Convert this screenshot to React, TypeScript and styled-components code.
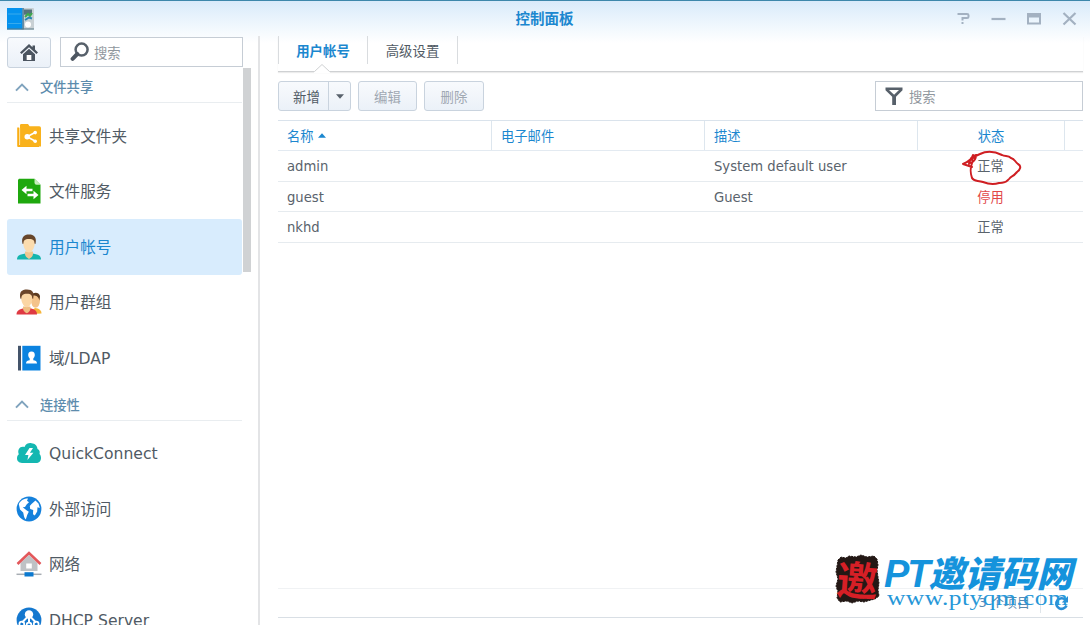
import React from "react";
import styled, { createGlobalStyle, css } from "styled-components";

const GlobalStyle = createGlobalStyle`
  * { box-sizing: border-box; }
  body {
    margin: 0;
    background: #fff;
    font-family: "DejaVu Sans", "Noto Sans CJK SC", sans-serif;
    color: #505a64;
  }
`;

const Window = styled.div`
  position: relative;
  width: 1090px;
  height: 625px;
  overflow: hidden;
  display: flex;
  flex-direction: column;
  background: linear-gradient(#d8eafa 0, #e6f2fc 14px, #fff 42px);
  border-top: 1px solid #3c87ab;
`;

const TitleBar = styled.header`
  display: grid;
  grid-template-columns: 1fr auto 1fr;
  align-items: center;
  height: 35px;
  flex: none;
  padding: 0 13px 0 7px;
`;

const Title = styled.h1`
  margin: 0 0 2px 5px;
  font: bold 14.5px/20px "Noto Sans CJK SC", sans-serif;
  color: #1b87cf;
`;

const WindowButtons = styled.div`
  display: flex;
  justify-content: flex-end;
  gap: 19px;
  padding-bottom: 2px;
  svg { display: block; }
`;

const Body = styled.div`
  display: flex;
  flex: 1;
  min-height: 0;
`;

const Sidebar = styled.aside`
  display: flex;
  flex-direction: column;
  width: 260px;
  flex: none;
  padding: 1px 7px 0 7px;
  border-right: 2px solid #e3e4e6;
`;

const SidebarTools = styled.div`
  display: flex;
  gap: 9px;
  height: 31px;
  flex: none;
`;

const raised = css`
  border: 1px solid #c9d3de;
  border-radius: 3px;
  background: linear-gradient(#f8fafd, #ebf1f8);
`;

const HomeButton = styled.div`
  ${raised}
  width: 44px;
  display: flex;
  align-items: center;
  justify-content: center;
`;

const SearchBox = styled.div<{ $width: number; $gap: number }>`
  display: flex;
  align-items: center;
  gap: ${(p) => p.$gap}px;
  width: ${(p) => p.$width}px;
  height: 30px;
  padding-left: 9px;
  border: 1px solid #c6cdd5;
  background: #fff;
  font-size: 13.3px;
  color: #8f969d;
`;

const SidebarScroll = styled.div`
  display: flex;
  flex: 1;
  min-height: 0;
  overflow: hidden;
`;

const Nav = styled.nav`
  width: 235px;
  flex: none;
`;

const ScrollThumb = styled.div`
  width: 9px;
  height: 204px;
  margin-left: 1px;
  background: #d0d2d4;
`;

const GroupHeader = styled.div`
  display: flex;
  align-items: center;
  gap: 10px;
  height: 35.4px;
  margin-bottom: 5px;
  padding: 3px 0 0 7px;
  border-bottom: 1px solid #e9edf0;
  font-size: 13.3px;
  font-weight: 500;
  color: #5d8cad;
`;

const NavItem = styled.div<{ $active?: boolean }>`
  display: flex;
  align-items: center;
  gap: 7px;
  height: 55.4px;
  padding-left: 9px;
  border-radius: 3px;
  font-size: 15.6px;
  line-height: 20px;
  white-space: nowrap;
  background: ${(p) => (p.$active ? "#d8ecfd" : "transparent")};
  color: ${(p) => (p.$active ? "#1b87cf" : "#505a64")};
  svg { flex: none; }
`;

const NavLabel = styled.span`
  padding-top: 2px;
`;

const Content = styled.main`
  display: flex;
  flex-direction: column;
  width: 805px;
  margin-left: 18px;
`;

const Tabs = styled.div`
  position: relative;
  display: flex;
  height: 36px;
  flex: none;
  border-bottom: 1px solid #cfd1d3;
  box-shadow: 0 1px 1px #ececec;
`;

const Tab = styled.div<{ $active?: boolean }>`
  display: flex;
  align-items: center;
  justify-content: center;
  width: 90px;
  height: 28px;
  border-right: 1px solid #d9dcdf;
  ${(p) => p.$active && "border-left: 1px solid #d9dcdf;"}
  font-size: 13.4px;
  font-weight: ${(p) => (p.$active ? 700 : 400)};
  color: ${(p) => (p.$active ? "#1b87cf" : "#505a64")};
`;

const TabNotch = styled.svg`
  position: absolute;
  left: 35px;
  bottom: -2px;
`;

const Toolbar = styled.div`
  display: flex;
  gap: 7px;
  height: 30px;
  flex: none;
  margin-top: 9px;
  > :last-child { margin-left: auto; }
`;

const Button = styled.div<{ $width: number; $disabled?: boolean }>`
  ${raised}
  display: flex;
  align-items: center;
  justify-content: center;
  width: ${(p) => p.$width}px;
  font-size: 13.4px;
  color: ${(p) => (p.$disabled ? "#a0a8b2" : "#505a64")};
`;

const ButtonLabel = styled.span`
  flex: 1;
  text-align: center;
  padding-left: 6px;
`;

const ButtonArrow = styled.span`
  display: flex;
  align-items: center;
  justify-content: center;
  width: 22px;
  align-self: stretch;
  border-left: 1px solid #c9d3de;
`;

const Table = styled.div`
  margin-top: 9px;
  border-top: 1px solid #dae3ec;
  flex: 1;
`;

const columns = "214px 213px 213px 147px 1fr";

const HeadRow = styled.div`
  display: grid;
  grid-template-columns: ${columns};
  height: 30px;
  border-bottom: 1px solid #e3eaf1;
`;

const HeadCell = styled.div<{ $center?: boolean }>`
  display: flex;
  align-items: center;
  gap: 4px;
  padding: 0 9px;
  justify-content: ${(p) => (p.$center ? "center" : "flex-start")};
  border-right: 1px solid #dde6ee;
  font-size: 13.3px;
  color: #1b87cf;
  &:last-child { border-right: 0; }
`;

const Row = styled.div`
  display: grid;
  grid-template-columns: ${columns};
  height: 30.6px;
  border-bottom: 1px solid #e6ebef;
`;

const Cell = styled.div<{ $center?: boolean; $alert?: boolean }>`
  display: flex;
  align-items: center;
  padding: ${(p) => (p.$center ? "0 10px 0 8px" : "2px 9px 0")};
  justify-content: ${(p) => (p.$center ? "center" : "flex-start")};
  font-size: 13.2px;
  white-space: nowrap;
  color: ${(p) => (p.$alert ? "#e24848" : "#5a636c")};
`;

const Footer = styled.footer`
  display: flex;
  align-items: center;
  justify-content: flex-end;
  height: 30px;
  flex: none;
  margin-bottom: 7px;
  padding-right: 14px;
  border-top: 1px solid #f0f2f4;
  border-bottom: 1px solid #d9dfe5;
  font-size: 13px;
  line-height: 18px;
  color: #5a8ab0;
`;

const RefreshArea = styled.span`
  display: flex;
  align-items: center;
  margin-left: 10px;
  padding-left: 13px;
  height: 20px;
  border-left: 1px solid #dfe5ea;
`;

const Scribble = styled.svg`
  position: absolute;
  left: 958px;
  top: 145px;
`;

const Watermark = styled.div`
  position: absolute;
  left: 835px;
  top: 552px;
  display: flex;
`;

const Seal = styled.div`
  position: relative;
  width: 48px;
  height: 54px;
  svg { display: block; }
`;

const SealText = styled.span`
  position: absolute;
  left: 2px;
  top: 4px;
  font: 700 41px/42px "Noto Sans CJK SC", sans-serif;
  color: #d61f26;
  transform: rotate(4deg);
`;

const WatermarkText = styled.div`
  display: flex;
  flex-direction: column;
  padding-left: 1px;
  white-space: nowrap;
`;

const Brand = styled.div`
  display: flex;
  align-items: baseline;
  height: 36px;
  font: italic 900 36px/36px "Noto Sans CJK SC", sans-serif;
  color: #1593dc;
`;

const BrandLatin = styled.span`
  font: italic 700 38px/36px "Liberation Sans", sans-serif;
  letter-spacing: -2px;
`;

const Site = styled.div`
  padding-left: 3px;
  font: 20px/18px "Liberation Serif", serif;
  letter-spacing: 0.4px;
  transform: scaleX(1.27);
  transform-origin: 3px 0;
  color: #2797d8;
`;

const Caret = ({ up }: { up?: boolean }) => (
  <svg width="8" height="5" viewBox="0 0 7 4">
    <path d={up ? "M0 4 3.5 0 7 4z" : "M0 0h7L3.5 4z"} fill={up ? "#1b87cf" : "#59626c"} />
  </svg>
);

const Chevron = () => (
  <svg width="16" height="10" viewBox="0 0 16 10">
    <path d="M2 8.6 8 2.6l6 6" fill="none" stroke="#7fa3bd" strokeWidth="2" />
  </svg>
);

const AppIcon = () => (
  <svg width="27" height="24" viewBox="0 0 27 24">
    <rect x="14" y="1" width="13" height="21.5" rx="1" fill="#c8d0d4" />
    <path d="M17 2.5h8v5.2h-8z" fill="#55727c" />
    <path d="m18 10 3-3 2 2 2-3" stroke="#3da94d" strokeWidth="2" fill="none" />
    <path d="m18 13 4-2.5 3 1" stroke="#2786b5" strokeWidth="2" fill="none" />
    <circle cx="21" cy="17.5" r="3" fill="#fff" />
    <path d="M0 1h15.5v21.5H0z" fill="#0492ee" />
    <path d="M1 7h13M1 16.5h13" stroke="#38abed" />
    <path d="M15.5 1h1.2v21.5h-1.2z" fill="#3f6f8c" />
    <path d="M0 22h27" stroke="#547784" />
  </svg>
);

const HomeIcon = () => (
  <svg width="20" height="19" viewBox="0 0 20 19">
    <path d="M10 1 1 9.5l1.6 1.6L10 4.3l7.4 6.8L19 9.5l-3-2.900V2.500h-2.500v1.800z" fill="#4c5560" />
    <path d="M4 11.200 10 5.800l6 5.400V18h-3.800v-6H7.800v6H4z" fill="#4c5560" />
    <path d="M7.800 12h4.400v5H7.800z" fill="#fff" />
    <path d="M4 17.500h12" stroke="#4c5560" />
  </svg>
);

const Magnifier = () => (
  <svg width="20" height="20" viewBox="0 0 20 20">
    <circle cx="11.600" cy="7.600" r="6" fill="none" stroke="#57606a" strokeWidth="2.500" />
    <path d="m7.300 12-4.700 4.800" stroke="#4c5560" strokeWidth="4" strokeLinecap="round" />
  </svg>
);

const Funnel = () => (
  <svg width="18" height="19" viewBox="0 0 18 19">
    <path d="M.5.500h17v2.700L11 9.800V18H7.200V9.800L.5 3.200z" fill="#57606a" />
    <path d="M4 3h10L9.100 7.800z" fill="#fff" />
  </svg>
);

const SharedFolderIcon = () => (
  <svg width="26" height="26" viewBox="0 0 26 26">
    <path d="M2.200 4.500v18.600H23" fill="none" stroke="#f9ad14" strokeWidth="2" strokeLinejoin="round" />
    <path d="M4 2.300Q4 1 5.400 1H12l1.600 2.200h9.600Q25 3.200 25 5v18.500H4z" fill="#f9b21c" />
    <path d="M3.700 5v16.500" stroke="#fbd580" strokeWidth=".8" />
    <path d="m19.500 9.200-8.500 4.600 8.500 4.400" fill="none" stroke="#fff" strokeWidth="1.600" />
    <circle cx="11.200" cy="13.800" r="2.700" fill="#fff" />
    <circle cx="19.200" cy="9.600" r="1.800" fill="#fff" />
    <circle cx="19.200" cy="18.200" r="1.800" fill="#fff" />
  </svg>
);

const FileServiceIcon = () => (
  <svg width="26" height="26" viewBox="0 0 26 26">
    <path d="M3 .8h15.500l6 6v18.700H2V1.800z" fill="#1fa80e" />
    <path d="M18.500.8v4q0 2 2 2h4z" fill="#c8edbd" />
    <path d="m5.500 12 5-4.200v2.900h6v2.600h-6v2.900zM22.500 17l-5 4.200v-2.900h-6v-2.600h6v-2.900z" fill="#fff" />
  </svg>
);

const UserIcon = () => (
  <svg width="26" height="26" viewBox="0 0 26 26">
    <path d="M1 25.500c0-4 3-5.200 8.500-6h7c5.500.8 8.500 2 8.500 6z" fill="#14b5ae" />
    <path d="M9 17.500h8v2.500c0 2-2 4-4 5-2-1-4-3-4-5z" fill="#efc791" />
    <path d="M7 7.500Q7 2 13 2t6 5.500c0 6-3 11-6 11s-6-5-6-11z" fill="#fbdcae" />
    <path d="M6.500 10C5 3 8 .5 13 .5S21 3 19.500 10l-1-.5c0-3-1-4.500-5.500-4.500S7.500 6.500 7.500 9.500z" fill="#67462b" />
  </svg>
);

const GroupIcon = () => (
  <svg width="26" height="26" viewBox="0 0 26 26">
    <path d="M15 25c1-3 2-5 4-6 4 .6 6.500 2 6.500 5.500z" fill="#f6b63c" />
    <ellipse cx="19.500" cy="11.500" rx="4.500" ry="7.300" fill="#f4c38a" />
    <path d="M15 6c3-4 9-2.500 9 1.500l-.6 4c-1-4-3-5-6-5z" fill="#5b3a20" />
    <path d="M.5 25.500c0-4 3-5.500 8-6.500h5c5 1 7.500 2.500 7.500 6.500z" fill="#df3a43" />
    <path d="M7 17.500h7.500v2c0 2-1.700 4-3.700 4.800-2-.8-3.800-2.800-3.800-4.800z" fill="#efbe83" />
    <path d="M5 7.500C5 3 7 2 10.700 2s5.800 1.500 5.800 5.500c0 6-2.800 10.700-5.700 10.700S5 13.500 5 7.500z" fill="#fbd6a4" />
    <path d="M4.400 9.800C3 3 5.500.5 11 .5s7.500 3 6.200 9.300l-1-.4c0-3-1-4.700-5.200-4.700-4.300 0-5.600 2-5.600 4.700z" fill="#6b4529" />
  </svg>
);

const DirectoryIcon = () => (
  <svg width="26" height="26" viewBox="0 0 26 26">
    <path d="M2 .8h3v24.700H2z" fill="#44546a" />
    <path d="M6.300.8h18.200v24.700H6.300z" fill="#0b83e0" />
    <path d="M15.500 6.500c2.300 0 3.500 1.500 3.300 3.800-.2 1.500-.8 2.500-1.500 3.200v1.800c2 .4 3.700.8 3.700 3.200H10c0-2.400 1.700-2.800 3.700-3.200v-1.800c-.7-.7-1.300-1.700-1.500-3.200-.2-2.300 1-3.800 3.300-3.800z" fill="#fff" />
  </svg>
);

const QuickConnectIcon = () => (
  <svg width="26" height="26" viewBox="0 0 26 26">
    <path d="M6 23c-3 0-5-2-5-4.700 0-2 .8-3.300 1.800-4.100C1 9 4.500 5.500 8.500 7 10 3.500 13 2.800 15.500 3.200c3.500.6 5.700 2 6 5.800 2.500 1 2.500 3.500 2 5 1 1 1.500 2.500 1.500 4 0 3-2 5-5 5z" fill="#14b7b1" />
    <path d="m13.500 8-4.500 7h3.400l-1 5 6-7.300h-3.500L17 8z" fill="#fff" />
  </svg>
);

const GlobeIcon = () => (
  <svg width="26" height="26" viewBox="0 0 26 26">
    <circle cx="13" cy="13" r="12.400" fill="#1481dc" />
    <path d="M2.800 8C5 4 8 2.600 12 2.500l-1 2.300 2 1.400-2.200 2L9 11l-2.300.2 3.800 3 2.300 1.600-1.500 3-1.500 4.700c-2-1.500-2-5-2.600-7L4 13.500z" fill="#fff" />
    <path d="m15.500 8 4-3.500 3 3 1.300 4.500-2.300-.8-.3 4.300-2.400 4-1.800-1.300.2-4.200-3-1-.4-3z" fill="#fff" />
  </svg>
);

const NetworkIcon = () => (
  <svg width="26" height="26" viewBox="0 0 26 26">
    <path d="M4.500 12 13 4l8.500 8v8h-17z" fill="#bfc2c5" />
    <path d="M10.200 12.500h5.600v5h-5.600z" fill="#fff" />
    <path d="m1.500 13 11.500-11 11.500 11" stroke="#e3585b" strokeWidth="2.600" fill="none" />
    <path d="M.5 23.300h25" stroke="#a7adb3" strokeWidth="1.500" />
    <path d="M8.500 21.200h9v4.300h-9z" fill="#0b79cf" />
  </svg>
);

const DhcpIcon = () => (
  <svg width="26" height="26" viewBox="0 0 26 26">
    <circle cx="13" cy="13" r="12.400" fill="#1478cf" />
    <circle cx="13" cy="7.500" r="4.200" fill="#fff" />
    <path d="M13 11v5M11.500 10 6 15.500M14.500 10l5.500 5.500" stroke="#fff" strokeWidth="2" />
    <g fill="none" stroke="#fff" strokeWidth="1.700">
      <circle cx="5.800" cy="17" r="2.400" />
      <circle cx="13" cy="18" r="2.400" />
      <circle cx="20.200" cy="17" r="2.400" />
    </g>
  </svg>
);

const RefreshIcon = () => (
  <svg width="15" height="15" viewBox="0 0 15 15">
    <path d="M12.500 9.500A5.300 5.300 0 1 1 11.500 4" fill="none" stroke="#2a8fd6" strokeWidth="2.600" />
    <path d="M14 0v6.500H7.800z" fill="#2a8fd6" />
  </svg>
);

type NavEntry = { label: string; Icon: React.FC; active?: boolean };

const groups: { title: string; items: NavEntry[] }[] = [
  {
    title: "文件共享",
    items: [
      { label: "共享文件夹", Icon: SharedFolderIcon },
      { label: "文件服务", Icon: FileServiceIcon },
      { label: "用户帐号", Icon: UserIcon, active: true },
      { label: "用户群组", Icon: GroupIcon },
      { label: "域/LDAP", Icon: DirectoryIcon },
    ],
  },
  {
    title: "连接性",
    items: [
      { label: "QuickConnect", Icon: QuickConnectIcon },
      { label: "外部访问", Icon: GlobeIcon },
      { label: "网络", Icon: NetworkIcon },
      { label: "DHCP Server", Icon: DhcpIcon },
    ],
  },
];

const users = [
  { name: "admin", description: "System default user", status: "正常" },
  { name: "guest", description: "Guest", status: "停用", disabled: true },
  { name: "nkhd", description: "", status: "正常" },
];

export default function App() {
  return (
    <>
      <GlobalStyle />
      <Window>
        <TitleBar>
          <AppIcon />
          <Title>控制面板</Title>
          <WindowButtons>
            <svg width="16" height="16" viewBox="0 0 16 16">
              <path d="M1.500 4h9.500q1.500 0 1.500 1.300v1.400Q12.500 8 11 8H6.500v2.500M6.500 12v2" fill="none" stroke="#a3b1c1" strokeWidth="2" />
            </svg>
            <svg width="16" height="16" viewBox="0 0 16 16">
              <path d="M.5 9h14" stroke="#a3b1c1" strokeWidth="2.200" />
            </svg>
            <svg width="16" height="16" viewBox="0 0 16 16">
              <path d="M2 4h12v9.500H2z" fill="none" stroke="#a3b1c1" strokeWidth="2" />
              <path d="M2 3.500h12v4H2z" fill="#a3b1c1" />
            </svg>
            <svg width="16" height="16" viewBox="0 0 16 16">
              <path d="m2.500 3 12 11.500m0-11.500-12 11.500" stroke="#a3b1c1" strokeWidth="2.200" />
            </svg>
          </WindowButtons>
        </TitleBar>
        <Body>
          <Sidebar>
            <SidebarTools>
              <HomeButton>
                <HomeIcon />
              </HomeButton>
              <SearchBox $width={183} $gap={4}>
                <Magnifier />
                搜索
              </SearchBox>
            </SidebarTools>
            <SidebarScroll>
              <Nav>
                {groups.map((group) => (
                  <React.Fragment key={group.title}>
                    <GroupHeader>
                      <Chevron />
                      {group.title}
                    </GroupHeader>
                    {group.items.map(({ label, Icon, active }) => (
                      <NavItem key={label} $active={active}>
                        <Icon />
                        <NavLabel>{label}</NavLabel>
                      </NavItem>
                    ))}
                  </React.Fragment>
                ))}
              </Nav>
              <ScrollThumb />
            </SidebarScroll>
          </Sidebar>
          <Content>
            <Tabs>
              <Tab $active>用户帐号</Tab>
              <Tab>高级设置</Tab>
              <TabNotch width="18" height="10" viewBox="0 0 18 10">
                <path d="M1 8.500 9 1l8 7.500V10H1z" fill="#fff" />
                <path d="M0 8.500h1.500L9 1.500l7.500 7H18" fill="none" stroke="#cfd1d3" />
              </TabNotch>
            </Tabs>
            <Toolbar>
              <Button $width={73}>
                <ButtonLabel>新增</ButtonLabel>
                <ButtonArrow>
                  <Caret />
                </ButtonArrow>
              </Button>
              <Button $width={59} $disabled>编辑</Button>
              <Button $width={60} $disabled>删除</Button>
              <SearchBox $width={208} $gap={6}>
                <Funnel />
                搜索
              </SearchBox>
            </Toolbar>
            <Table>
              <HeadRow>
                <HeadCell>
                  名称
                  <Caret up />
                </HeadCell>
                <HeadCell>电子邮件</HeadCell>
                <HeadCell>描述</HeadCell>
                <HeadCell $center>状态</HeadCell>
                <HeadCell />
              </HeadRow>
              {users.map((user) => (
                <Row key={user.name}>
                  <Cell>{user.name}</Cell>
                  <Cell />
                  <Cell>{user.description}</Cell>
                  <Cell $center $alert={user.disabled}>{user.status}</Cell>
                </Row>
              ))}
            </Table>
            <Footer>
              3 个项目
              <RefreshArea>
                <RefreshIcon />
              </RefreshArea>
            </Footer>
          </Content>
        </Body>
        <Scribble width="68" height="42" viewBox="0 0 68 42" fill="none" stroke="#cf1e22" strokeWidth="2" strokeLinejoin="round" strokeLinecap="round">
          <path d="M14 14c0-2 3-4 8-6 8-4 16-2 22 1 3 2 6 0 9 3 4 1 4 4 7 6 4 2 2 6-1 8-5 6-5 3-8 7-4 5-6 3-10 4-6 2-11 1-16-1-5-2-9 0-11-4-2-6-2-9 0-15M18 9c-5 1-6 5-7 9M15 9c-1 4-5 7-10 9l9 3M18 9c0 4-1 6-5 8" />
        </Scribble>
        <Watermark>
          <Seal>
            <svg width="48" height="54" viewBox="0 0 48 54">
              <path d="m3 7 3-3 5 1 3-2 7 1 5-2 6 2 7-1 3 3 1 6-1 5 1 7 1 6-1 7 1 6-4 3-4 1-7 2-6-1-6 2-5-2-7 1-3-4 1-6-2-6 2-7-2-7 1-6z" fill="#231815" stroke="#231815" strokeDasharray="2 1" />
            </svg>
            <SealText>邀</SealText>
          </Seal>
          <WatermarkText>
            <Brand>
              <BrandLatin>PT</BrandLatin>
              邀请码网
            </Brand>
            <Site>www.ptyqm.com</Site>
          </WatermarkText>
        </Watermark>
      </Window>
    </>
  );
}
